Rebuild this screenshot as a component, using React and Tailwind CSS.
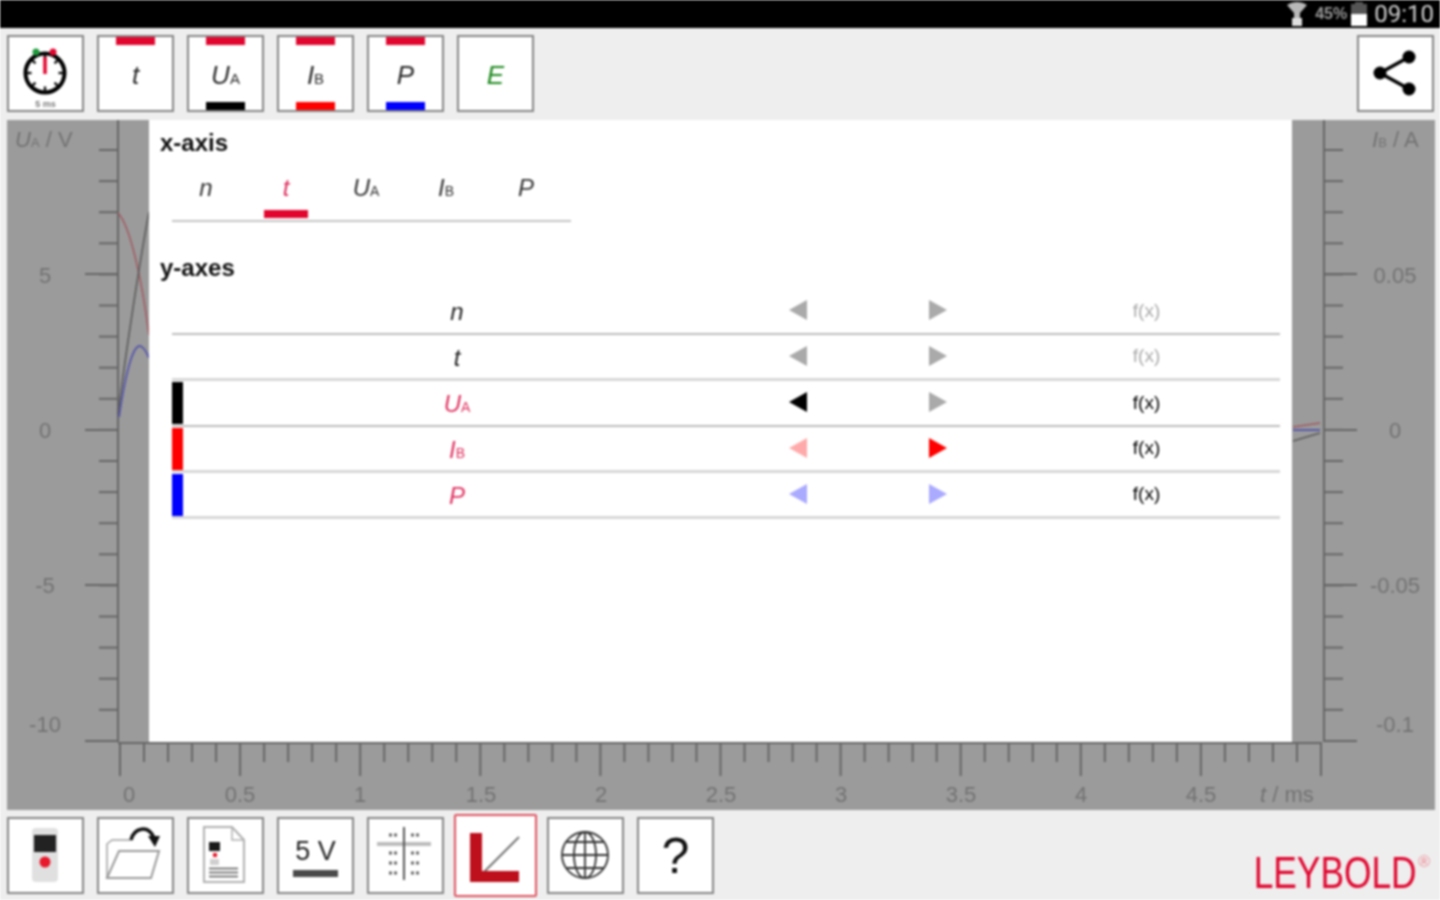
import { Fragment } from "react";

const font = "font-['Liberation_Sans',Arial,sans-serif]";

function Sym({ main, sub, className = "", size = "text-[26px]", subSize = "text-[15px]" }) {
  return (
    <span className={`italic leading-none whitespace-nowrap ${size} ${className}`}>
      {main}
      {sub && <span className={`not-italic ${subSize}`}>{sub}</span>}
    </span>
  );
}

function ToolButton({ children, className = "" }) {
  return (
    <div className={`relative flex h-[77px] w-[77px] shrink-0 items-center justify-center border-2 border-[#858585] bg-white ${className}`}>
      {children}
    </div>
  );
}

function Icon({ children }) {
  return (
    <svg viewBox="0 0 73 73" className="h-[73px] w-[73px]" fill="none">
      {children}
    </svg>
  );
}

function QuantityButton({ main, sub, color, className }) {
  return (
    <ToolButton>
      <div className="absolute left-[17px] top-0 h-2 w-[39px] bg-[#e2062f]" />
      <Sym main={main} sub={sub} className={`mt-[2px] ${className ?? "text-[#2a2a2a]"}`} />
      {color && <div className={`absolute bottom-0 left-[17px] h-2 w-[39px] ${color}`} />}
    </ToolButton>
  );
}

function Stopwatch() {
  const ticks = [0, 45, 90, 135, 180, 225, 270, 315];
  return (
    <ToolButton>
      <Icon>
        <circle cx="36" cy="36" r="19.5" stroke="#000" strokeWidth="4" />
        {ticks.map((a) => (
          <line key={a} x1="36" y1="18" x2="36" y2="22.5" stroke="#111" strokeWidth="2.4" transform={`rotate(${a} 36 36)`} />
        ))}
        <line x1="36" y1="20" x2="36" y2="37" stroke="#e2062f" strokeWidth="3.5" />
        <circle cx="27" cy="15" r="3.5" fill="#1f9a3c" />
        <circle cx="44" cy="15" r="3.5" fill="#e2062f" />
      </Icon>
      <span className="absolute bottom-[1px] left-0 w-full text-center text-[9px] font-bold leading-none text-[#7a7a7a]">5 ms</span>
    </ToolButton>
  );
}

function ShareIcon() {
  return (
    <Icon>
      <path d="M50 20 L21 36 L50 52" stroke="#000" strokeWidth="3.5" />
      <circle cx="50" cy="20" r="6.5" fill="#000" />
      <circle cx="21" cy="36" r="6.5" fill="#000" />
      <circle cx="50" cy="52" r="6.5" fill="#000" />
    </Icon>
  );
}

function DeviceIcon() {
  return (
    <Icon>
      <rect x="23" y="9" width="26" height="54" rx="4" fill="#e0e0e0" />
      <rect x="25" y="16" width="22" height="17" fill="#222222" />
      <circle cx="36" cy="43" r="5.5" fill="#e8192c" />
    </Icon>
  );
}

function FolderIcon() {
  return (
    <Icon>
      <path d="M8 59 V25 L13 21 H32" stroke="#a0a0a0" strokeWidth="1.5" />
      <path d="M20 32 H60 L52 59 H8 Z" fill="#fff" stroke="#9a9a9a" strokeWidth="2" />
      <path d="M32 21 C35 9 49 5 55 19" stroke="#111" strokeWidth="3.5" />
      <path d="M49 17 L61 17 L56 28 Z" fill="#111" />
    </Icon>
  );
}

function DocIcon() {
  return (
    <Icon>
      <path d="M15 8 H43 L55 21 V63 H15 Z" fill="#fff" stroke="#b0b0b0" strokeWidth="2" />
      <path d="M43 8 V21 H55" stroke="#b0b0b0" strokeWidth="1.5" />
      <rect x="20" y="23" width="11" height="9" fill="#1a1a1a" />
      <rect x="24" y="34" width="4" height="4" fill="#e8192c" />
      <rect x="21" y="40" width="9" height="6" fill="#cfcfcf" />
      <path d="M20 49.5 H49 M20 53.5 H49 M20 57.5 H49" stroke="#555" strokeWidth="1.6" />
    </Icon>
  );
}

function ReadoutIcon() {
  const rows = [16, 34, 44, 54];
  return (
    <Icon>
      <rect x="8" y="23" width="54" height="4" fill="#bdbdbd" />
      <line x1="35" y1="8" x2="35" y2="61" stroke="#555" strokeWidth="2" />
      {rows.map((y) => (
        <path key={y} d={`M20 ${y} h3 m2 0 h3 M42 ${y} h3 m2 0 h3`} stroke="#666" strokeWidth="3" />
      ))}
    </Icon>
  );
}

function GraphIcon() {
  return (
    <svg viewBox="0 0 79 79" className="h-[79px] w-[79px]" fill="none">
      <line x1="22" y1="62" x2="63" y2="21" stroke="#777" strokeWidth="2" />
      <path d="M14 17 H26 V55 H63 V66 H14 Z" fill="#bd0f1c" />
    </svg>
  );
}

function GlobeIcon() {
  return (
    <Icon>
      <g stroke="#333" strokeWidth="1.8">
        <circle cx="36" cy="36" r="23" />
        <ellipse cx="36" cy="36" rx="11" ry="23" />
        <line x1="36" y1="13" x2="36" y2="59" />
        <line x1="13" y1="36" x2="59" y2="36" />
        <path d="M17 23 H55 M17 49 H55" />
      </g>
    </Icon>
  );
}

function Arrow({ dir, color }) {
  return (
    <svg viewBox="0 0 18 20" className="-mt-[2px] mx-auto h-5 w-[18px]">
      <polygon points={dir === "left" ? "0,10 18,0 18,20" : "0,0 18,10 0,20"} className={color} />
    </svg>
  );
}

const tabs = [
  { main: "n" },
  { main: "t", active: true },
  { main: "U", sub: "A" },
  { main: "I", sub: "B" },
  { main: "P" },
];

const rows = [
  { main: "n", left: "fill-[#aaaaaa]", right: "fill-[#aaaaaa]", line: "border-b-2 border-[#bcbcbc]", fx: "text-[#aaaaaa]", nameColor: "text-[#222222]" },
  { main: "t", left: "fill-[#aaaaaa]", right: "fill-[#aaaaaa]", line: "border-b-[3px] border-[#d8d8d8]", fx: "text-[#aaaaaa]", nameColor: "text-[#222222]" },
  { main: "U", sub: "A", bar: "bg-black", left: "fill-black", right: "fill-[#aaaaaa]", line: "border-b-2 border-[#bcbcbc]", fx: "text-black", nameColor: "text-[#e0305f]" },
  { main: "I", sub: "B", bar: "bg-[#ff0000]", left: "fill-[#ffaaaa]", right: "fill-[#ff0000]", line: "border-b-[3px] border-[#d8d8d8]", fx: "text-black", nameColor: "text-[#e0305f]" },
  { main: "P", bar: "bg-[#0000ff]", left: "fill-[#aaaaff]", right: "fill-[#aaaaff]", line: "border-b-[3px] border-[#d8d8d8]", fx: "text-black", nameColor: "text-[#e0305f]" },
];

const yMinor = Array.from({ length: 19 }, (_, i) => 150 + i * 31.1);
const yMajor = [274, 430, 585, 741];
const xTicks = Array.from({ length: 51 }, (_, i) => 120 + i * 24.02);
const xLabels = [
  ["0", 129], ["0.5", 240], ["1", 360], ["1.5", 481], ["2", 601],
  ["2.5", 721], ["3", 841], ["3.5", 961], ["4", 1081], ["4.5", 1201],
];
const leftLabels = [["5", 283], ["0", 438], ["-5", 593], ["-10", 732]];
const rightLabels = [["0.05", 283], ["0", 438], ["-0.05", 593], ["-0.1", 732]];

function Chart() {
  return (
    <svg viewBox="7 120 1428 690" className={`absolute inset-0 h-full w-full ${font}`} fill="none">
      <g stroke="#666666" strokeWidth="2">
        <line x1="118" y1="120" x2="118" y2="742" />
        <line x1="1324" y1="120" x2="1324" y2="742" />
        <line x1="118" y1="743" x2="1322" y2="743" />
        {yMinor.map((y) => (
          <Fragment key={y}>
            <line x1="99" y1={y} x2="118" y2={y} />
            <line x1="1324" y1={y} x2="1343" y2={y} />
          </Fragment>
        ))}
        {yMajor.map((y) => (
          <Fragment key={y}>
            <line x1="85" y1={y} x2="118" y2={y} />
            <line x1="1324" y1={y} x2="1357" y2={y} />
          </Fragment>
        ))}
        {xTicks.map((x, i) => (
          <line key={x} x1={x} y1="743" x2={x} y2={i % 5 === 0 ? 776 : 762} />
        ))}
      </g>

      <path d="M118 213 C130 225 142 280 149 335" stroke="#a05a62" strokeWidth="1.6" />
      <path d="M118 415 C126 350 140 260 149 212" stroke="#5a5a5a" strokeWidth="1.6" />
      <path d="M119 417 C126 370 134 340 142 347 C145 349 147 353 149 358" stroke="#5a5aa8" strokeWidth="2" />
      <path d="M1293 427 L1320 423" stroke="#a05a62" strokeWidth="1.6" />
      <path d="M1293 430 H1320" stroke="#5a5aa8" strokeWidth="2" />
      <path d="M1293 441 L1320 433" stroke="#5a5a5a" strokeWidth="1.6" />

      <g className="fill-[#727272] text-[22px]">
        {leftLabels.map(([t, y]) => (
          <text key={t} x="45" y={y} textAnchor="middle">{t}</text>
        ))}
        {rightLabels.map(([t, y]) => (
          <text key={t} x="1395" y={y} textAnchor="middle">{t}</text>
        ))}
        {xLabels.map(([t, x]) => (
          <text key={t} x={x} y="802" textAnchor="middle">{t}</text>
        ))}
        <text x="15" y="147"><tspan fontStyle="italic">U</tspan><tspan fontSize="13">A</tspan> / V</text>
        <text x="1372" y="147"><tspan fontStyle="italic">I</tspan><tspan fontSize="13">B</tspan> / A</text>
        <text x="1260" y="802"><tspan fontStyle="italic">t</tspan> / ms</text>
      </g>
    </svg>
  );
}

function SettingsPanel() {
  return (
    <div className="absolute left-[142px] top-0 h-[622px] w-[1143px] bg-white">
      <h2 className="ml-[11px] mt-[11px] text-[24px] font-bold leading-6 text-[#111111]">x-axis</h2>

      <div className="ml-[23px] mt-[10px] h-[57px] w-[399px] border-b-2 border-[#c4c4c4]">
        <div className="-ml-[6px] flex">
          {tabs.map((t) => (
            <div key={t.main} className="flex h-[54px] w-20 flex-col items-center">
              <div className="flex h-[45px] items-center">
                <Sym main={t.main} sub={t.sub} size="text-[24px]" subSize="text-[14px]" className={t.active ? "text-[#e0305f]" : "text-[#333333]"} />
              </div>
              {t.active && <div className="h-2 w-[44px] bg-[#e2062f]" />}
            </div>
          ))}
        </div>
      </div>

      <h2 className="ml-[11px] mt-[34px] text-[24px] font-bold leading-6 text-[#111111]">y-axes</h2>

      <div className="ml-[23px] mt-[9px] w-[1108px]">
        {rows.map((r) => (
          <div key={r.main} className={`grid h-[46px] grid-cols-[11px_548px_134px_146px_269px] items-center ${r.line}`}>
            <div className={`mt-[1px] h-[42px] self-start ${r.bar ?? ""}`} />
            <div className="pt-[5px] text-center">
              <Sym main={r.main} sub={r.sub} size="text-[24px]" subSize="text-[14px]" className={r.nameColor} />
            </div>
            <Arrow dir="left" color={r.left} />
            <Arrow dir="right" color={r.right} />
            <div className={`-mt-[2px] pl-[2px] text-center text-[19px] leading-none ${r.fx}`}>f(x)</div>
          </div>
        ))}
      </div>
    </div>
  );
}

export default function App() {
  return (
    <div className={`flex h-[900px] w-[1440px] flex-col overflow-hidden bg-[#eeeeee] blur-[0.8px] ${font}`}>
      {/* status bar */}
      <div className="flex h-[28px] items-center justify-end bg-black pr-[6px]">
        <svg viewBox="0 0 22 24" className="mr-[7px] h-6 w-[22px]" fill="none">
          <path d="M1 3 C7 -1 15 -1 21 3 L14 11 V16 H8 V11 Z" fill="#b8b8b8" />
          <rect x="6" y="16" width="10" height="8" fill="#e0e0e0" />
        </svg>
        <span className="mr-[4px] text-[16px] font-bold leading-none text-[#9a9a9a]">45%</span>
        <div className="flex h-[24px] w-[16px] flex-col items-center">
          <div className="h-[2px] w-[8px] bg-[#555555]" />
          <div className="h-[10px] w-full bg-[#555555]" />
          <div className="h-[12px] w-full bg-white" />
        </div>
        <span className="ml-[7px] font-['Roboto',sans-serif] text-[24px] leading-none text-[#d0d0d0]">09:10</span>
      </div>

      {/* top toolbar */}
      <div className="flex h-[92px] gap-[13px] pl-[7px] pr-[6px] pt-[7px]">
        <Stopwatch />
        <QuantityButton main="t" />
        <QuantityButton main="U" sub="A" color="bg-black" />
        <QuantityButton main="I" sub="B" color="bg-[#ff0000]" />
        <QuantityButton main="P" color="bg-[#0000ff]" />
        <ToolButton>
          <Sym main="E" className="mt-[2px] text-[#1f8a1f]" />
        </ToolButton>
        <ToolButton className="ml-auto">
          <ShareIcon />
        </ToolButton>
      </div>

      {/* plot area with the axes behind the settings panel */}
      <div className="relative ml-[7px] mr-[5px] h-[690px] shrink-0 bg-[#9b9b9b]">
        <Chart />
        <SettingsPanel />
      </div>

      {/* bottom toolbar */}
      <div className="flex flex-1 items-start gap-[13px] pl-[7px] pr-[10px] pt-[7px]">
        <ToolButton><DeviceIcon /></ToolButton>
        <ToolButton><FolderIcon /></ToolButton>
        <ToolButton><DocIcon /></ToolButton>
        <ToolButton>
          <div className="flex flex-col items-center">
            <span className="text-[27px] leading-8 text-[#222222]">5 V</span>
            <div className="mt-[3px] h-[7px] w-[45px] bg-[#4a4a4a]" />
          </div>
        </ToolButton>
        <ToolButton><ReadoutIcon /></ToolButton>
        <div className="-mx-[3px] -mt-[3px] flex h-[83px] w-[83px] shrink-0 items-center justify-center rounded-[2px] border-2 border-[#e0525f] bg-white">
          <GraphIcon />
        </div>
        <ToolButton><GlobeIcon /></ToolButton>
        <ToolButton>
          <span className="text-[50px] leading-none text-[#111111]">?</span>
        </ToolButton>
        <div className="ml-auto mt-[34px] flex items-start">
          <span className="origin-right -translate-x-[2px] scale-x-[0.785] text-[45px] leading-[44px] text-[#e2062f]">LEYBOLD</span>
          <span className="mt-[3px] text-[16px] leading-none text-[#ee8a94]">®</span>
        </div>
      </div>
    </div>
  );
}
